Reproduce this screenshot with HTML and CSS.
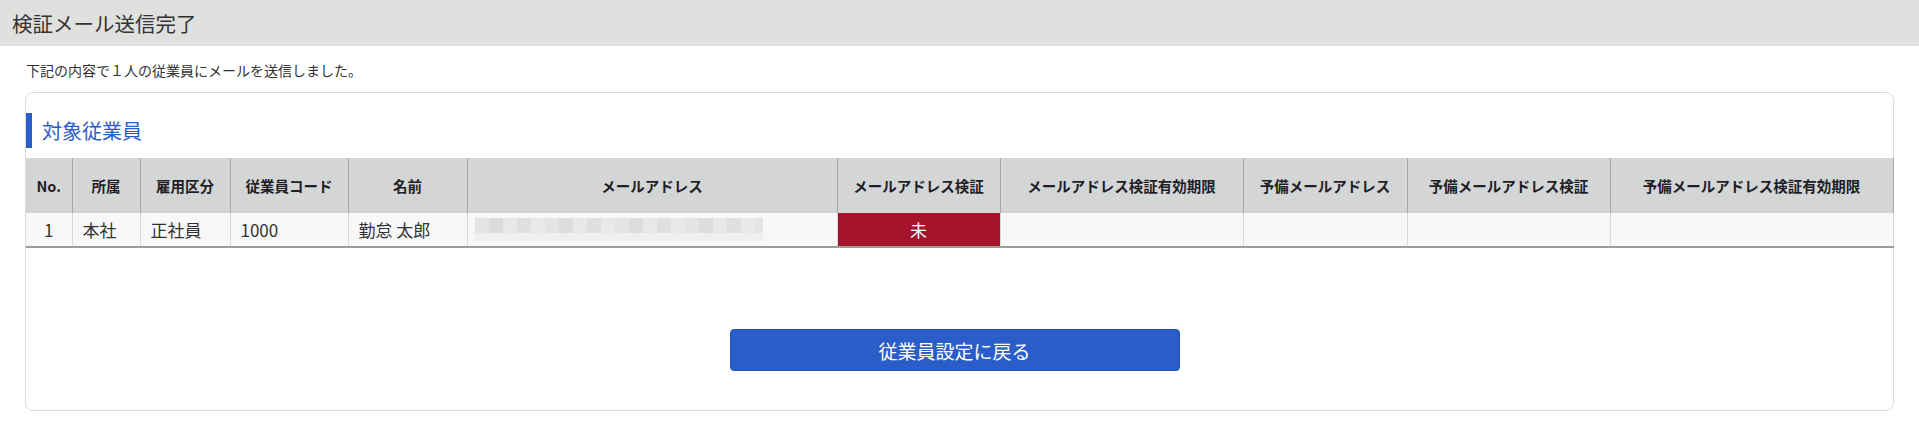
FILE: index.html
```html
<!DOCTYPE html>
<html lang="ja">
<head>
<meta charset="utf-8">
<title>検証メール送信完了</title>
<link rel="stylesheet" href="styles.css">
</head>
<body>
<header class="page-header">
  <h1 class="page-title">検証メール送信完了</h1>
</header>
<p class="lead">下記の内容で１人の従業員にメールを送信しました。</p>
<section class="card">
  <h2 class="section-title">対象従業員</h2>
  <table class="emp-table">
    <colgroup>
      <col class="c-no"><col class="c-dept"><col class="c-type"><col class="c-code"><col class="c-name">
      <col class="c-mail"><col class="c-verify"><col class="c-limit"><col class="c-sub"><col class="c-subverify"><col class="c-sublimit">
    </colgroup>
    <thead>
      <tr>
        <th>No.</th>
        <th>所属</th>
        <th>雇用区分</th>
        <th>従業員コード</th>
        <th>名前</th>
        <th>メールアドレス</th>
        <th>メールアドレス検証</th>
        <th>メールアドレス検証有効期限</th>
        <th>予備メールアドレス</th>
        <th>予備メールアドレス検証</th>
        <th>予備メールアドレス検証有効期限</th>
      </tr>
    </thead>
    <tbody>
      <tr>
        <td class="center">1</td>
        <td>本社</td>
        <td>正社員</td>
        <td>1000</td>
        <td>勤怠 太郎</td>
        <td><div class="blurred" aria-label="メールアドレス（非表示）"></div></td>
        <td class="status-no">未</td>
        <td></td>
        <td></td>
        <td></td>
        <td></td>
      </tr>
    </tbody>
  </table>
  <div class="actions">
    <button class="btn-primary" type="button">従業員設定に戻る</button>
  </div>
</section>
</body>
</html>
```

FILE: styles.css
```css
* { box-sizing: border-box; }

html, body {
  margin: 0;
  padding: 0;
  background: #ffffff;
  color: #333333;
  font-family: "Noto Sans CJK JP", "Noto Sans", sans-serif;
}

.page-header {
  height: 46px;
  background: #e0e0df;
  display: flex;
  align-items: center;
  padding-left: 12px;
}

.page-title {
  margin: 0;
  font-size: 20.5px;
  font-weight: 400;
  color: #333333;
  line-height: 46px;
}

.lead {
  margin: 0;
  padding: 14px 26px 0;
  font-size: 14px;
  line-height: 20px;
  color: #333333;
}

.card {
  margin: 12px 25px 0;
  border: 1px solid #dcdcdc;
  border-radius: 8px;
  padding: 20px 0 39px;
}

.section-title {
  margin: 0;
  height: 35px;
  border-left: 6px solid #2a5dc8;
  padding-left: 10px;
  font-size: 20px;
  font-weight: 400;
  line-height: 35px;
  color: #2a5dc8;
}

.emp-table {
  margin-top: 10px;
  width: 100%;
  table-layout: fixed;
  border-collapse: collapse;
  border-bottom: 2px solid #9b9b9b;
}

.c-no { width: 46px; }
.c-dept { width: 68px; }
.c-type { width: 90px; }
.c-code { width: 118px; }
.c-name { width: 119px; }
.c-mail { width: 370px; }
.c-verify { width: 163px; }
.c-limit { width: 243px; }
.c-sub { width: 164px; }
.c-subverify { width: 203px; }
.c-sublimit { width: 283px; }

.emp-table th {
  height: 55px;
  background: #d4d5d5;
  border-right: 1px solid #a8a8a8;
  font-size: 14.5px;
  font-weight: 700;
  color: #1e1e28;
  text-align: center;
  white-space: nowrap;
  padding: 0 4px;
}

.emp-table td {
  height: 34px;
  background: #f8f8f8;
  border-right: 1px solid #d8d8d8;
  font-size: 17px;
  color: #333333;
  padding: 0 10px;
  white-space: nowrap;
  vertical-align: middle;
}

.emp-table td.num { letter-spacing: 0.5px; }

.emp-table td.center { text-align: center; }

.emp-table td.status-no {
  background: #a5142b;
  color: #ffffff;
  text-align: center;
}

.blurred {
  width: 288px;
  height: 23px;
  margin-left: -3px;
  background:
    linear-gradient(to bottom, rgba(248,248,248,0) 0 64%, #efefef 64% 100%),
    repeating-linear-gradient(90deg, #e4e4e4 0 14px, #dcdcdc 14px 28px, #e8e8e8 28px 42px, #dfdfdf 42px 56px, #e9e9ea 56px 70px);
}

.actions {
  display: flex;
  justify-content: center;
  margin-top: 81px;
  padding-right: 10px;
}

.btn-primary {
  width: 450px;
  height: 42px;
  border: 1px solid #2452b8;
  border-radius: 4px;
  background: #2a5dc8;
  color: #ffffff;
  font-family: "Noto Sans CJK JP", "Noto Sans", sans-serif;
  font-size: 19px;
  font-weight: 400;
  cursor: pointer;
}
```
